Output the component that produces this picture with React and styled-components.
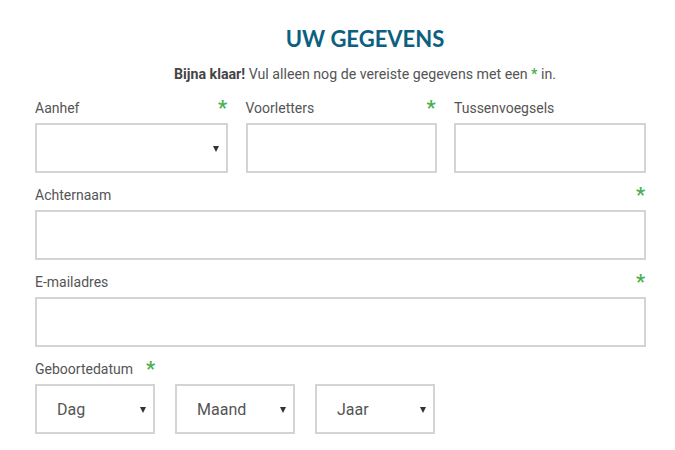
import React from "react";
import styled, { createGlobalStyle } from "styled-components";

const GlobalStyle = createGlobalStyle`
  html, body {
    margin: 0;
    padding: 0;
    background: #fff;
  }
  body {
    font-family: Roboto, "Liberation Sans", Arial, sans-serif;
    color: #555;
  }
`;

const Page = styled.div`
  width: 675px;
  height: 450px;
  overflow: hidden;
  box-sizing: border-box;
  padding: 24px 29px 0 35px;
`;

const Header = styled.div`
  padding-left: 49px;
  text-align: center;
`;

const Title = styled.h2`
  margin: 0;
  font-family: Lato, "Open Sans", sans-serif;
  font-weight: 700;
  font-size: 22px;
  line-height: 30px;
  color: #0b6080;
`;

const Intro = styled.p`
  margin: 11px 0 0;
  font-size: 14.2px;
  line-height: 18px;
  color: #555;
  b {
    color: #444;
  }
`;

const Star = styled.span`
  color: #4cb050;
  font-size: ${(p) => (p.$small ? "14px" : "20px")};
  font-weight: 700;
  line-height: 1;
`;

const Form = styled.div`
  margin-top: 15px;
  display: flex;
  flex-direction: column;
  gap: 12px;
`;

const Row = styled.div`
  display: grid;
  grid-template-columns: ${(p) => p.$cols || "1fr"};
  gap: ${(p) => p.$gap || "18px"};
`;

const Field = styled.div`
  display: flex;
  flex-direction: column;
`;

const LabelRow = styled.div`
  display: flex;
  align-items: center;
  justify-content: ${(p) => (p.$inline ? "flex-start" : "space-between")};
  gap: 13px;
  height: 20px;
  margin-bottom: 5px;
  padding-right: 1px;
`;

const Label = styled.label`
  font-size: 14px;
  color: #555;
`;

const Input = styled.input`
  box-sizing: border-box;
  width: 100%;
  height: 50px;
  margin: 0;
  border: 2px solid #d4d4d4;
  border-radius: 0;
  background: #fff;
  outline: none;
  font-family: inherit;
  font-size: 16px;
  padding: 0 18px;
`;

const SelectWrap = styled.div`
  position: relative;
  width: ${(p) => p.$width || "100%"};
  &::after {
    content: "";
    position: absolute;
    right: 9px;
    top: 23px;
    border-left: 3.5px solid transparent;
    border-right: 3.5px solid transparent;
    border-top: 6px solid #333;
    pointer-events: none;
  }
`;

const Select = styled.select`
  box-sizing: border-box;
  width: 100%;
  height: 50px;
  margin: 0;
  border: 2px solid #d4d4d4;
  border-radius: 0;
  background: #fff;
  appearance: none;
  outline: none;
  font-family: inherit;
  font-size: 16px;
  color: #555;
  padding: 0 20px;
`;

const DateRow = styled.div`
  display: flex;
  gap: 20px;
`;

function App() {
  return (
    <>
      <GlobalStyle />
      <Page>
        <Header>
          <Title>UW GEGEVENS</Title>
          <Intro>
            <b>Bijna klaar!</b> Vul alleen nog de vereiste gegevens met een{" "}
            <Star $small>*</Star> in.
          </Intro>
        </Header>
        <Form>
          <Row $cols="193px 191px 192px" $gap="17.5px">
            <Field>
              <LabelRow>
                <Label>Aanhef</Label>
                <Star>*</Star>
              </LabelRow>
              <SelectWrap>
                <Select defaultValue="">
                  <option value=""></option>
                  <option>Dhr.</option>
                  <option>Mevr.</option>
                </Select>
              </SelectWrap>
            </Field>
            <Field>
              <LabelRow>
                <Label>Voorletters</Label>
                <Star>*</Star>
              </LabelRow>
              <Input type="text" />
            </Field>
            <Field>
              <LabelRow>
                <Label>Tussenvoegsels</Label>
              </LabelRow>
              <Input type="text" />
            </Field>
          </Row>
          <Field>
            <LabelRow>
              <Label>Achternaam</Label>
              <Star>*</Star>
            </LabelRow>
            <Input type="text" />
          </Field>
          <Field>
            <LabelRow>
              <Label>E-mailadres</Label>
              <Star>*</Star>
            </LabelRow>
            <Input type="email" />
          </Field>
          <Field>
            <LabelRow $inline>
              <Label>Geboortedatum</Label>
              <Star>*</Star>
            </LabelRow>
            <DateRow>
              <SelectWrap $width="120px">
                <Select defaultValue="">
                  <option value="">Dag</option>
                </Select>
              </SelectWrap>
              <SelectWrap $width="120px">
                <Select defaultValue="">
                  <option value="">Maand</option>
                </Select>
              </SelectWrap>
              <SelectWrap $width="120px">
                <Select defaultValue="">
                  <option value="">Jaar</option>
                </Select>
              </SelectWrap>
            </DateRow>
          </Field>
        </Form>
      </Page>
    </>
  );
}

export default App;
